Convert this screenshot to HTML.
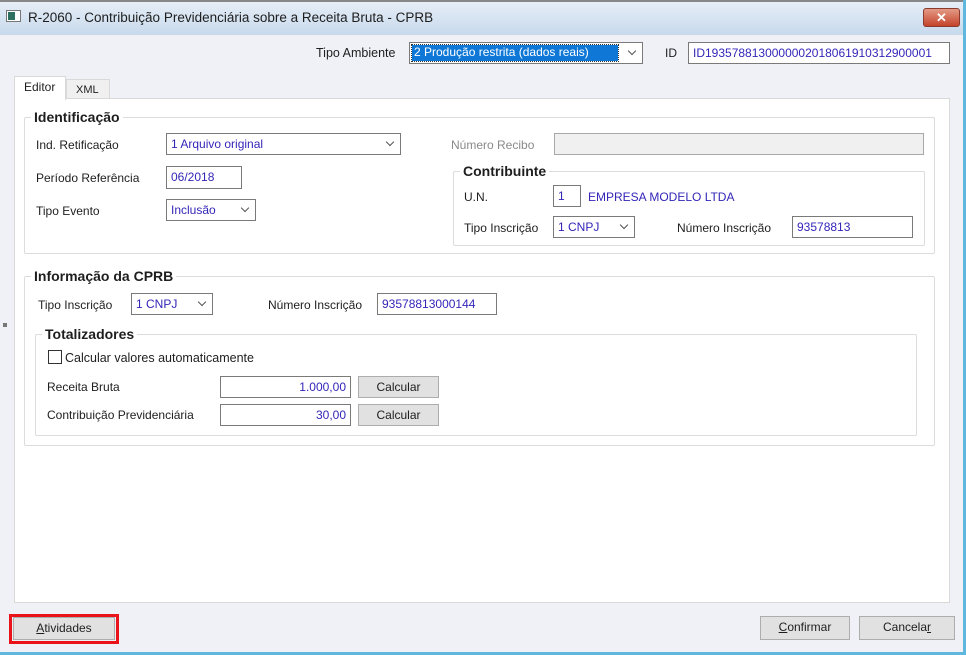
<!DOCTYPE html>
<html><head><meta charset="utf-8"><style>
*{box-sizing:border-box;margin:0;padding:0}
body{width:966px;height:655px;overflow:hidden;background:#fff;font-family:"Liberation Sans",Tahoma,sans-serif;font-size:12px;color:#1e1e1e;position:relative}
.a{position:absolute}
.win{left:0;top:0;width:966px;height:655px;background:#f0f1f6;border-right:3px solid #5fb7dd;border-bottom:3px solid #5fb7dd}
.title{left:0;top:0;width:963px;height:35px;background:linear-gradient(#e6eef7,#c7d9ec);border-top:2px solid #888}
.t{white-space:nowrap;line-height:14px}
.v{color:#3326b8}
.inp{background:#fff;border:1px solid #7a7a7a;height:22px;padding:3px 4px;line-height:14px;white-space:nowrap}
.sel{background:#fff;border:1px solid #7a7a7a;height:22px;padding:3px 4px;line-height:14px;white-space:nowrap}
.sel:after{content:"";position:absolute;right:7px;top:5px;width:5px;height:5px;border-right:1px solid #555;border-bottom:1px solid #555;transform:rotate(45deg)}
.grp{border:1px solid #dcdcdc;border-radius:2px}
.lg{background:#fff;font-weight:bold;font-size:14px;padding:0 3px;line-height:15px}
.btn{background:#e1e1e1;border:1px solid #adadad;text-align:center;line-height:20px;height:22px}
</style></head><body>
<div class="a win"></div>
<div class="a title"></div>
<div class="a" style="left:6px;top:10px;width:15px;height:12px;border:1px solid #777;background:#fff"><div class="a" style="left:1px;top:1px;width:7px;height:8px;background:#2f6f5f"></div></div>
<div class="a t" style="left:28px;top:11px;font-size:13.5px">R-2060 - Contribuição Previdenciária sobre a Receita Bruta - CPRB</div>
<div class="a" style="left:923px;top:8px;width:37px;height:19px;background:linear-gradient(#e49a86,#c4432a);border:1px solid #8a3b2e;border-radius:3px;color:#fff;font-weight:bold;text-align:center;line-height:17px;font-size:13px">✕</div>

<div class="a t" style="left:316px;top:46px;font-size:12.5px">Tipo Ambiente</div>
<div class="a sel" style="left:409px;top:42px;width:234px;padding:2px"><div style="background:#0f78d7;color:#fff;width:206px;height:16px;line-height:15px;padding-left:2px;outline:1px dotted #333">2 Produção restrita (dados reais)</div></div>
<div class="a t" style="left:665px;top:46px">ID</div>
<div class="a inp v" style="left:688px;top:42px;width:262px">ID1935788130000002018061910312900001</div>

<div class="a" style="left:66px;top:79px;width:44px;height:20px;background:#f0f0f0;border:1px solid #d9d9d9"></div>
<div class="a t" style="left:76px;top:83px;font-size:11px">XML</div>
<div class="a" style="left:14px;top:98px;width:936px;height:505px;background:#fff;border:1px solid #d9d9d9"></div>
<div class="a" style="left:14px;top:76px;width:52px;height:24px;background:#fff;border:1px solid #d9d9d9;border-bottom:none"></div>
<div class="a t" style="left:24px;top:80px">Editor</div>

<div class="a grp" style="left:24px;top:117px;width:911px;height:137px"></div>
<div class="a lg" style="left:31px;top:110px">Identificação</div>
<div class="a t" style="left:36px;top:138px">Ind. Retificação</div>
<div class="a sel v" style="left:166px;top:133px;width:235px">1 Arquivo original</div>
<div class="a t" style="left:36px;top:171px">Período Referência</div>
<div class="a inp v" style="left:166px;top:166px;width:76px;height:23px">06/2018</div>
<div class="a t" style="left:36px;top:204px">Tipo Evento</div>
<div class="a sel v" style="left:166px;top:199px;width:90px">Inclusão</div>
<div class="a t" style="left:451px;top:138px;color:#8a8a8a">Número Recibo</div>
<div class="a" style="left:554px;top:133px;width:370px;height:22px;background:#f0f0f0;border:1px solid #a8a8a8"></div>

<div class="a grp" style="left:453px;top:171px;width:472px;height:75px"></div>
<div class="a lg" style="left:460px;top:164px">Contribuinte</div>
<div class="a t" style="left:464px;top:190px">U.N.</div>
<div class="a inp v" style="left:553px;top:185px;width:28px">1</div>
<div class="a t v" style="left:588px;top:190px">EMPRESA MODELO LTDA</div>
<div class="a t" style="left:464px;top:221px">Tipo Inscrição</div>
<div class="a sel v" style="left:553px;top:216px;width:82px">1 CNPJ</div>
<div class="a t" style="left:677px;top:221px">Número Inscrição</div>
<div class="a inp v" style="left:792px;top:216px;width:121px">93578813</div>

<div class="a grp" style="left:24px;top:276px;width:911px;height:170px"></div>
<div class="a lg" style="left:31px;top:269px">Informação da CPRB</div>
<div class="a t" style="left:38px;top:298px">Tipo Inscrição</div>
<div class="a sel v" style="left:131px;top:293px;width:82px">1 CNPJ</div>
<div class="a t" style="left:268px;top:298px">Número Inscrição</div>
<div class="a inp v" style="left:377px;top:293px;width:120px">93578813000144</div>

<div class="a grp" style="left:35px;top:334px;width:882px;height:102px"></div>
<div class="a lg" style="left:42px;top:327px">Totalizadores</div>
<div class="a" style="left:48px;top:350px;width:14px;height:14px;border:1px solid #333;background:#fff"></div>
<div class="a t" style="left:65px;top:351px;font-size:12.5px">Calcular valores automaticamente</div>
<div class="a t" style="left:47px;top:380px">Receita Bruta</div>
<div class="a inp v" style="left:220px;top:376px;width:131px;text-align:right">1.000,00</div>
<div class="a btn" style="left:358px;top:376px;width:81px">Calcular</div>
<div class="a t" style="left:47px;top:408px">Contribuição Previdenciária</div>
<div class="a inp v" style="left:220px;top:404px;width:131px;text-align:right">30,00</div>
<div class="a btn" style="left:358px;top:404px;width:81px">Calcular</div>

<div class="a" style="left:3px;top:323px;width:4px;height:4px;background:#777"></div>
<div class="a" style="left:9px;top:614px;width:110px;height:30px;border:3px solid #e8141a"></div>
<div class="a btn" style="left:13px;top:617px;width:102px;height:23px"><u>A</u>tividades</div>
<div class="a btn" style="left:760px;top:616px;width:90px;height:24px"><u>C</u>onfirmar</div>
<div class="a btn" style="left:859px;top:616px;width:96px;height:24px">Cancela<u>r</u></div>
</body></html>
